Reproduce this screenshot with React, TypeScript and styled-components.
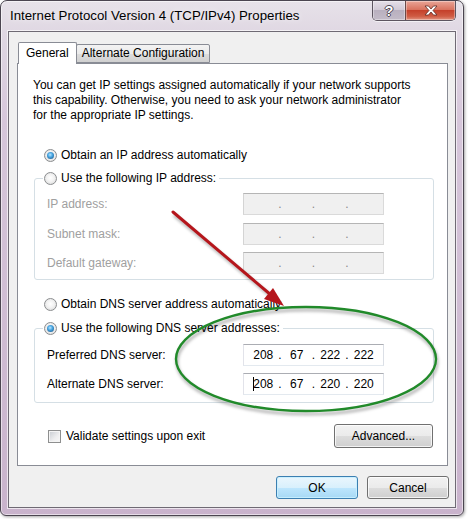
import React from "react";
import styled, { createGlobalStyle } from "styled-components";

const UI_FONT = `"Liberation Sans", Arial, sans-serif`;

const GlobalStyle = createGlobalStyle`
  html, body { margin: 0; padding: 0; background: #ffffff; }
  body { font-family: ${UI_FONT}; font-size: 12px; color: #000; }
  * { box-sizing: border-box; }
`;

const Stage = styled.div`
  position: relative;
  width: 468px;
  height: 519px;
`;

const Window = styled.div`
  width: 464px;
  height: 516px;
  border: 1px solid #4b4550;
  border-radius: 7px 7px 6px 6px;
  background: linear-gradient(180deg, #e7e2e9 0px, #e0d8e3 30px, #d6c6da 120px, #c9b3cc 100%);
  box-shadow: inset 0 0 0 1px rgba(255, 255, 255, 0.55), 1px 1px 3px rgba(0, 0, 0, 0.35);
  padding: 0 7px 7px;
  display: flex;
  flex-direction: column;
`;

const TitleBar = styled.div`
  height: 30px;
  display: flex;
  justify-content: space-between;
  align-items: flex-start;
`;

const Title = styled.div`
  padding: 7px 0 0 2px;
  font-size: 13.25px;
  line-height: 16px;
  color: #000;
  text-shadow: 0 0 6px rgba(255, 255, 255, 0.9);
`;

const CaptionGroup = styled.div`
  display: flex;
  height: 20px;
  border: 1px solid #5d5560;
  border-top: none;
  border-radius: 0 0 5px 5px;
  overflow: hidden;
  box-shadow: 0 1px 0 rgba(255, 255, 255, 0.6);
`;

const CaptionButton = styled.div<{ $close?: boolean }>`
  width: ${(p) => (p.$close ? "50px" : "32px")};
  height: 100%;
  display: flex;
  align-items: center;
  justify-content: center;
  font: bold 14px ${UI_FONT};
  color: #fff;
  text-shadow: 1px 0 0 #4f4855, -1px 0 0 #4f4855, 0 1px 0 #4f4855, 0 -1px 0 #4f4855;
  border-left: ${(p) => (p.$close ? "1px solid #6a4a48" : "none")};
  box-shadow: inset 0 0 0 1px rgba(255, 255, 255, 0.35);
  background: ${(p) =>
    p.$close
      ? "linear-gradient(180deg, #e9a597 0%, #d9735f 45%, #c5412b 50%, #cf5b43 80%, #e2937f 100%)"
      : "linear-gradient(180deg, #e5dfe8 0%, #d2cad6 45%, #b9b0bf 50%, #c3bbc8 100%)"};
`;

const Client = styled.div`
  flex: 1;
  display: flex;
  flex-direction: column;
  background: #f0f0f0;
  border: 1px solid #6f6a74;
  box-shadow: 0 0 0 1px rgba(255, 255, 255, 0.65);
  padding: 10px 7px 8px 8px;
`;

const TabStrip = styled.div`
  display: flex;
  align-items: flex-end;
  height: 21px;
  padding-left: 1px;
  position: relative;
  z-index: 1;
`;

const Tab = styled.div<{ $active?: boolean }>`
  height: ${(p) => (p.$active ? "22px" : "19px")};
  margin-bottom: ${(p) => (p.$active ? "-1px" : "0")};
  margin-left: ${(p) => (p.$active ? "0" : "-1px")};
  position: relative;
  z-index: ${(p) => (p.$active ? 2 : 1)};
  border: 1px solid #898c95;
  border-bottom: ${(p) => (p.$active ? "none" : "1px solid #898c95")};
  border-radius: 2px 2px 0 0;
  padding: 0 ${(p) => (p.$active ? "7px" : "5px")};
  display: flex;
  align-items: center;
  line-height: 15px;
  background: ${(p) =>
    p.$active ? "#ffffff" : "linear-gradient(180deg, #f3f3f3 0%, #ebebeb 50%, #dddddd 52%, #d0d0d0 100%)"};
`;

const Panel = styled.div`
  flex: 0 0 403px;
  display: flex;
  flex-direction: column;
  background: #ffffff;
  border: 1px solid #898c95;
  padding: 14px 14px 0 15px;
`;

const Intro = styled.p`
  margin: 0;
  line-height: 15px;
`;

const OptionRow = styled.label<{ $top: number }>`
  display: flex;
  align-items: center;
  gap: 4px;
  height: 15px;
  margin: ${(p) => p.$top}px 0 0 11px;
  line-height: 15px;
`;

const RadioMark = styled.span<{ $checked?: boolean }>`
  position: relative;
  flex: 0 0 13px;
  width: 13px;
  height: 13px;
  border-radius: 50%;
  border: 1px solid #8b8d8f;
  background: radial-gradient(circle at 50% 45%, #ffffff 0%, #f2f2f2 45%, #d3d3d3 100%);
  &::after {
    content: "";
    display: ${(p) => (p.$checked ? "block" : "none")};
    position: absolute;
    inset: 2px;
    border-radius: 50%;
    background: radial-gradient(circle at 45% 40%, #b9e6ff 0%, #49a6e2 40%, #1f5f92 85%, #1b4f7c 100%);
  }
`;

const Group = styled.fieldset<{ $top: number; $bottom: number }>`
  margin: ${(p) => p.$top}px 0 0 1px;
  width: 400px;
  min-inline-size: 0;
  border: 1px solid #d5dfe5;
  border-radius: 3px;
  padding: 0 0 ${(p) => p.$bottom}px 0;
`;

const Legend = styled.legend`
  margin-left: 8px;
  padding: 0 3px 0 1px;
  display: flex;
  align-items: center;
  gap: 4px;
  line-height: 15px;
  height: 15px;
`;

const FieldGrid = styled.div<{ $pad: number; $gap: number }>`
  display: grid;
  grid-template-columns: 196px 141px;
  row-gap: ${(p) => p.$gap}px;
  align-items: center;
  padding: ${(p) => p.$pad}px 0 0 12px;
`;

const FieldLabel = styled.span<{ $disabled?: boolean }>`
  color: ${(p) => (p.$disabled ? "#a0a0a0" : "#000")};
`;

const IpBox = styled.div<{ $disabled?: boolean }>`
  width: 141px;
  height: 22px;
  display: flex;
  align-items: center;
  padding-left: 6px;
  border: 1px solid;
  border-color: ${(p) =>
    p.$disabled ? "#b5b5b5 #dadada #dadada #d4d4d4" : "#abadb3 #dbdfe6 #e3e9ef #e2e3ea"};
  background: ${(p) => (p.$disabled ? "#f0f0f0" : "#ffffff")};
  color: ${(p) => (p.$disabled ? "#8a8a8a" : "#000")};
`;

const Octet = styled.span`
  width: 26.5px;
  text-align: center;
  white-space: nowrap;
`;

const Dot = styled.span`
  width: 7px;
  text-align: center;
`;

const Caret = styled.span`
  display: inline-block;
  width: 1px;
  height: 14px;
  margin-right: -1px;
  vertical-align: -3px;
  background: #000;
`;

const BottomRow = styled.div`
  display: flex;
  align-items: center;
  margin-top: 21px;
  height: 24px;
`;

const CheckLabel = styled.label`
  display: flex;
  align-items: center;
  gap: 5px;
  margin-left: 15px;
`;

const CheckMark = styled.span`
  width: 13px;
  height: 13px;
  border: 1px solid #8e8f8f;
  box-shadow: inset 0 0 0 1px #f4f4f4;
  background: linear-gradient(135deg, #c7cbd1 0%, #eeeeef 60%, #f8f8f8 100%);
`;

const PushButton = styled.button<{ $default?: boolean; $w: number; $h: number }>`
  width: ${(p) => p.$w}px;
  height: ${(p) => p.$h}px;
  margin: 0;
  padding: 0;
  font: 12px ${UI_FONT};
  color: #000;
  border-radius: 3px;
  border: 1px solid ${(p) => (p.$default ? "#3c7fb1" : "#707070")};
  box-shadow: inset 0 0 0 1px ${(p) => (p.$default ? "rgba(200, 240, 255, 0.9)" : "rgba(255, 255, 255, 0.75)")};
  background: ${(p) =>
    p.$default
      ? "linear-gradient(180deg, #eaf6fd 0%, #d9f0fc 50%, #bee6fd 51%, #a7d9f5 100%)"
      : "linear-gradient(180deg, #f2f2f2 0%, #ebebeb 50%, #dddddd 51%, #cfcfcf 100%)"};
`;

const AdvancedButton = styled(PushButton)`
  margin-left: auto;
`;

const ButtonRow = styled.div`
  display: flex;
  justify-content: flex-end;
  gap: 9px;
  margin: 10px -1px 0 0;
`;

const Annotations = styled.svg`
  position: absolute;
  left: 0;
  top: 0;
  pointer-events: none;
`;

type Octets = [string, string, string, string];

function IpField({ value, disabled, caret }: { value?: Octets; disabled?: boolean; caret?: boolean }) {
  const parts = value ?? (["", "", "", ""] as Octets);
  return (
    <IpBox $disabled={disabled}>
      {parts.map((part, i) => (
        <React.Fragment key={i}>
          <Octet>
            {caret && i === 0 ? <Caret /> : null}
            {part}
          </Octet>
          {i < 3 ? <Dot>.</Dot> : null}
        </React.Fragment>
      ))}
    </IpBox>
  );
}

export default function App() {
  return (
    <Stage>
      <GlobalStyle />
      <Window>
        <TitleBar>
          <Title>Internet Protocol Version 4 (TCP/IPv4) Properties</Title>
          <CaptionGroup>
            <CaptionButton>?</CaptionButton>
            <CaptionButton $close>
              <svg width="14" height="11" viewBox="0 0 14 11">
                <path
                  d="M1 1 H4.5 L7 4 L9.5 1 H13 L9 5.5 L13 10 H9.5 L7 7 L4.5 10 H1 L5 5.5 Z"
                  fill="#ffffff"
                  stroke="#5a2a24"
                  strokeWidth="0.8"
                  strokeLinejoin="round"
                />
              </svg>
            </CaptionButton>
          </CaptionGroup>
        </TitleBar>

        <Client>
          <TabStrip>
            <Tab $active>General</Tab>
            <Tab>Alternate Configuration</Tab>
          </TabStrip>

          <Panel>
            <Intro>
              You can get IP settings assigned automatically if your network supports
              <br />
              this capability. Otherwise, you need to ask your network administrator
              <br />
              for the appropriate IP settings.
            </Intro>

            <OptionRow $top={25}>
              <RadioMark $checked />
              Obtain an IP address automatically
            </OptionRow>

            <Group $top={8} $bottom={5}>
              <Legend>
                <RadioMark />
                Use the following IP address:
              </Legend>
              <FieldGrid $pad={7} $gap={7.5}>
                <FieldLabel $disabled>IP address:</FieldLabel>
                <IpField disabled />
                <FieldLabel $disabled>Subnet mask:</FieldLabel>
                <IpField disabled />
                <FieldLabel $disabled>Default gateway:</FieldLabel>
                <IpField disabled />
              </FieldGrid>
            </Group>

            <OptionRow $top={17}>
              <RadioMark />
              Obtain DNS server address automatically
            </OptionRow>

            <Group $top={9} $bottom={7}>
              <Legend>
                <RadioMark $checked />
                Use the following DNS server addresses:
              </Legend>
              <FieldGrid $pad={8} $gap={7}>
                <FieldLabel>Preferred DNS server:</FieldLabel>
                <IpField value={["208", "67", "222", "222"]} />
                <FieldLabel>Alternate DNS server:</FieldLabel>
                <IpField value={["208", "67", "220", "220"]} caret />
              </FieldGrid>
            </Group>

            <BottomRow>
              <CheckLabel>
                <CheckMark />
                Validate settings upon exit
              </CheckLabel>
              <AdvancedButton $w={99} $h={24}>
                Advanced...
              </AdvancedButton>
            </BottomRow>
          </Panel>

          <ButtonRow>
            <PushButton $default $w={82} $h={23}>
              OK
            </PushButton>
            <PushButton $w={82} $h={23}>
              Cancel
            </PushButton>
          </ButtonRow>
        </Client>
      </Window>

      <Annotations width="468" height="519" viewBox="0 0 468 519">
        <defs>
          <filter id="soft" x="-10%" y="-10%" width="120%" height="130%">
            <feGaussianBlur stdDeviation="1.6" />
          </filter>
        </defs>
        {/* green ring around the DNS fields, with a faint drop shadow */}
        <ellipse cx="307" cy="362" rx="130" ry="52" fill="none" stroke="rgba(0,0,0,0.28)" strokeWidth="3" filter="url(#soft)" />
        <ellipse cx="306" cy="359" rx="130" ry="52" fill="none" stroke="#218a2a" strokeWidth="2.4" />
        {/* red pointer towards the DNS option */}
        <g filter="url(#soft)" opacity="0.3">
          <line x1="174" y1="215" x2="272" y2="297" stroke="#000" strokeWidth="3" />
        </g>
        <line x1="173" y1="212" x2="271" y2="295" stroke="#b5161c" strokeWidth="3" strokeLinecap="round" />
        <polygon points="284,306 264,299 273,288" fill="#b5161c" />
      </Annotations>
    </Stage>
  );
}
